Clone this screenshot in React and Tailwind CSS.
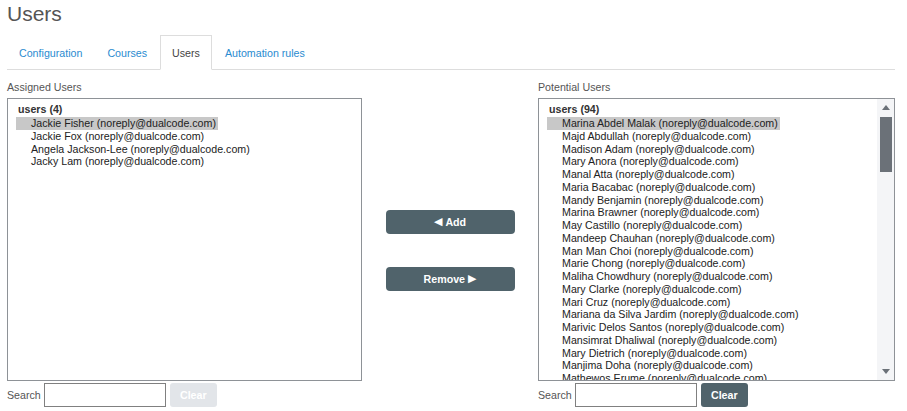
import React from "react";

const assigned = [
  "Jackie Fisher (noreply@dualcode.com)",
  "Jackie Fox (noreply@dualcode.com)",
  "Angela Jackson-Lee (noreply@dualcode.com)",
  "Jacky Lam (noreply@dualcode.com)",
];

const potentialNames = [
  "Marina Abdel Malak",
  "Majd Abdullah",
  "Madison Adam",
  "Mary Anora",
  "Manal Atta",
  "Maria Bacabac",
  "Mandy Benjamin",
  "Marina Brawner",
  "May Castillo",
  "Mandeep Chauhan",
  "Man Man Choi",
  "Marie Chong",
  "Maliha Chowdhury",
  "Mary Clarke",
  "Mari Cruz",
  "Mariana da Silva Jardim",
  "Marivic Delos Santos",
  "Mansimrat Dhaliwal",
  "Mary Dietrich",
  "Manjima Doha",
  "Mathewos Erume",
];
const potential = potentialNames.map((n) => `${n} (noreply@dualcode.com)`);

function ListBox({ title, items, scroll }) {
  return (
    <div className="h-[283px] border border-[#8e9297] bg-white flex overflow-hidden">
      <div className="flex-1 overflow-hidden pl-[8px] pt-[3px] text-[10.67px] leading-[12.75px]">
        <div className="pl-[2px] font-bold leading-[15px] text-[#333]">{title}</div>
        {items.map((it, i) => (
          <div
            key={i}
            className={
              "w-fit whitespace-nowrap pl-[15px] pr-[2px] h-[12.75px] leading-[12.75px] text-[#222] " +
              (i === 0 ? "bg-[#c8c8c8]" : "")
            }
          >
            {it}
          </div>
        ))}
      </div>
      {scroll && (
        <div className="w-[17px] bg-[#f4f5f7] flex flex-col items-center">
          <div className="h-[17px] w-full flex items-center justify-center">
            <svg width="8" height="5" viewBox="0 0 8 5">
              <polygon points="4,0 8,5 0,5" fill="#6b7178" />
            </svg>
          </div>
          <div className="mt-[1px] w-[12px] h-[55px] bg-[#6b7178]" />
          <div className="flex-1" />
          <div className="h-[17px] w-full flex items-center justify-center">
            <svg width="8" height="5" viewBox="0 0 8 5">
              <polygon points="0,0 8,0 4,5" fill="#6b7178" />
            </svg>
          </div>
        </div>
      )}
    </div>
  );
}

function SearchRow({ active }) {
  return (
    <div className="flex items-center mt-[2px] h-[24px]">
      <span className="text-[10.67px] text-[#555] mr-[3px]">Search</span>
      <input className="w-[122px] h-[24px] border border-[#808080] bg-white outline-none" />
      <button
        className={
          "ml-[4px] w-[47px] h-[24px] rounded-[3px] text-[10.67px] font-bold text-white " +
          (active ? "bg-[#50636b]" : "bg-[#e2e5e9]")
        }
      >
        Clear
      </button>
    </div>
  );
}

export default function App() {
  const tabs = ["Configuration", "Courses", "Users", "Automation rules"];
  return (
    <div className="font-['Liberation_Sans',Arial,sans-serif] pl-[7px] pr-[12px] w-[907px] h-[411px] bg-white overflow-hidden">
      <h1 className="text-[21px] leading-[24px] pt-[2px] text-[#555]">Users</h1>
      <div className="mt-[9px] flex border-b border-[#ddd] h-[35px]">
        {tabs.map((t) => {
          const active = t === "Users";
          return (
            <div
              key={t}
              className={
                "px-[11px] mr-[1px] h-[35px] flex items-center text-[10.67px] border " +
                (active
                  ? "border-[#ddd] border-b-white text-[#444] bg-white"
                  : "border-transparent text-[#2a8bd0]")
              }
            >
              {t}
            </div>
          );
        })}
      </div>
      <div className="flex mt-[11px]">
        <div className="w-[355px]">
          <div className="text-[10.67px] leading-[13px] text-[#555] mb-[4px]">Assigned Users</div>
          <ListBox title="users (4)" items={assigned} />
          <SearchRow active={false} />
        </div>
        <div className="w-[176px] flex flex-col items-center pt-[129px] gap-[33px]">
          <button className="w-[129px] h-[24px] rounded-[4px] bg-[#50636b] text-white text-[10.67px] font-bold flex items-center justify-center gap-[3px]">
            <span className="text-[11px] font-['DejaVu_Sans',sans-serif]">◀</span>
            <span>Add</span>
          </button>
          <button className="w-[129px] h-[24px] rounded-[4px] bg-[#50636b] text-white text-[10.67px] font-bold flex items-center justify-center gap-[3px]">
            <span>Remove</span>
            <span className="text-[11px] font-['DejaVu_Sans',sans-serif]">▶</span>
          </button>
        </div>
        <div className="w-[357px]">
          <div className="text-[10.67px] leading-[13px] text-[#555] mb-[4px]">Potential Users</div>
          <ListBox title="users (94)" items={potential} scroll />
          <SearchRow active />
        </div>
      </div>
    </div>
  );
}
